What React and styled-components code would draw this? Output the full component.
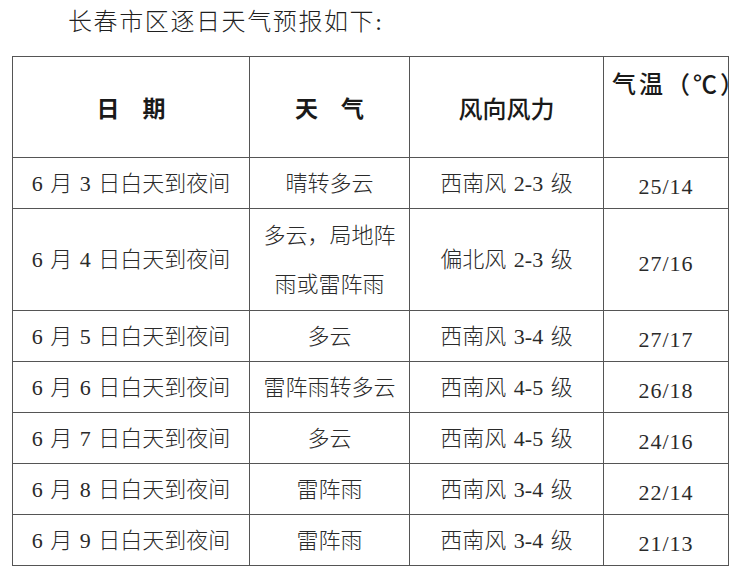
import React from 'react';
import styled, { createGlobalStyle } from 'styled-components';

const GlobalStyle = createGlobalStyle`
  html, body {
    margin: 0;
    padding: 0;
    background: #fff;
  }
  body {
    font-family: "Liberation Serif", "Noto Sans CJK SC", serif;
    color: #222;
  }
`;

const Page = styled.div`
  width: 741px;
  height: 571px;
  padding: 0 12px;
  box-sizing: border-box;
  overflow: hidden;
  background: #fff;
`;

const Title = styled.p`
  margin: 0;
  height: 56px;
  padding-left: 56px;
  line-height: 44px;
  font-size: 24px;
  font-weight: 300;
  letter-spacing: 1.6px;
  color: #1f1f1f;
`;

const Table = styled.table`
  width: 716px;
  border-collapse: collapse;
  table-layout: fixed;
  border: 1px solid #555;
`;

const Col = styled.col`
  width: ${({ w }) => w}px;
`;

const HeadRow = styled.tr`
  height: 101px;
`;

const Row = styled.tr`
  height: ${({ tall }) => (tall ? 102 : 51)}px;
`;

const HeadCell = styled.th`
  border: 1px solid #555;
  padding: 0;
  font-family: "Noto Sans CJK SC", sans-serif;
  font-size: ${({ size }) => size || 22}px;
  font-weight: ${({ weight }) => weight || 700};
  color: #1a1a1a;
  text-align: center;
  vertical-align: middle;
  white-space: nowrap;
`;

const TempHead = styled(HeadCell)`
  vertical-align: top;
  text-align: left;
  padding: 11px 0 0 8px;
  font-size: 24px;
  font-weight: 500;
  line-height: 30px;
  letter-spacing: 3px;
  overflow: visible;
`;

const Cell = styled.td`
  border: 1px solid #555;
  padding: 0 8px;
  font-size: 22px;
  font-weight: 300;
  line-height: 49px;
  word-spacing: 2px;
  color: #2a2a2a;
  text-align: center;
  vertical-align: middle;
`;

const TempCell = styled(Cell)`
  padding-top: 8px;
  line-height: 40px;
  letter-spacing: 1px;
`;

const forecast = [
  { day: 3, weather: '晴转多云', wind: '西南风 2-3 级', temp: '25/14' },
  { day: 4, weather: '多云，局地阵雨或雷阵雨', wind: '偏北风 2-3 级', temp: '27/16', tall: true },
  { day: 5, weather: '多云', wind: '西南风 3-4 级', temp: '27/17' },
  { day: 6, weather: '雷阵雨转多云', wind: '西南风 4-5 级', temp: '26/18' },
  { day: 7, weather: '多云', wind: '西南风 4-5 级', temp: '24/16' },
  { day: 8, weather: '雷阵雨', wind: '西南风 3-4 级', temp: '22/14' },
  { day: 9, weather: '雷阵雨', wind: '西南风 3-4 级', temp: '21/13' },
];

export default function App() {
  return (
    <Page>
      <GlobalStyle />
      <Title>长春市区逐日天气预报如下:</Title>
      <Table>
        <colgroup>
          <Col w={237} />
          <Col w={160} />
          <Col w={194} />
          <Col w={125} />
        </colgroup>
        <thead>
          <HeadRow>
            <HeadCell size={23}>日　期</HeadCell>
            <HeadCell size={23}>天　气</HeadCell>
            <HeadCell size={24} weight={500}>风向风力</HeadCell>
            <TempHead>气温（℃）</TempHead>
          </HeadRow>
        </thead>
        <tbody>
          {forecast.map((f) => (
            <Row key={f.day} tall={f.tall}>
              <Cell>6 月 {f.day} 日白天到夜间</Cell>
              <Cell>{f.weather}</Cell>
              <Cell>{f.wind}</Cell>
              <TempCell>{f.temp}</TempCell>
            </Row>
          ))}
        </tbody>
      </Table>
    </Page>
  );
}
